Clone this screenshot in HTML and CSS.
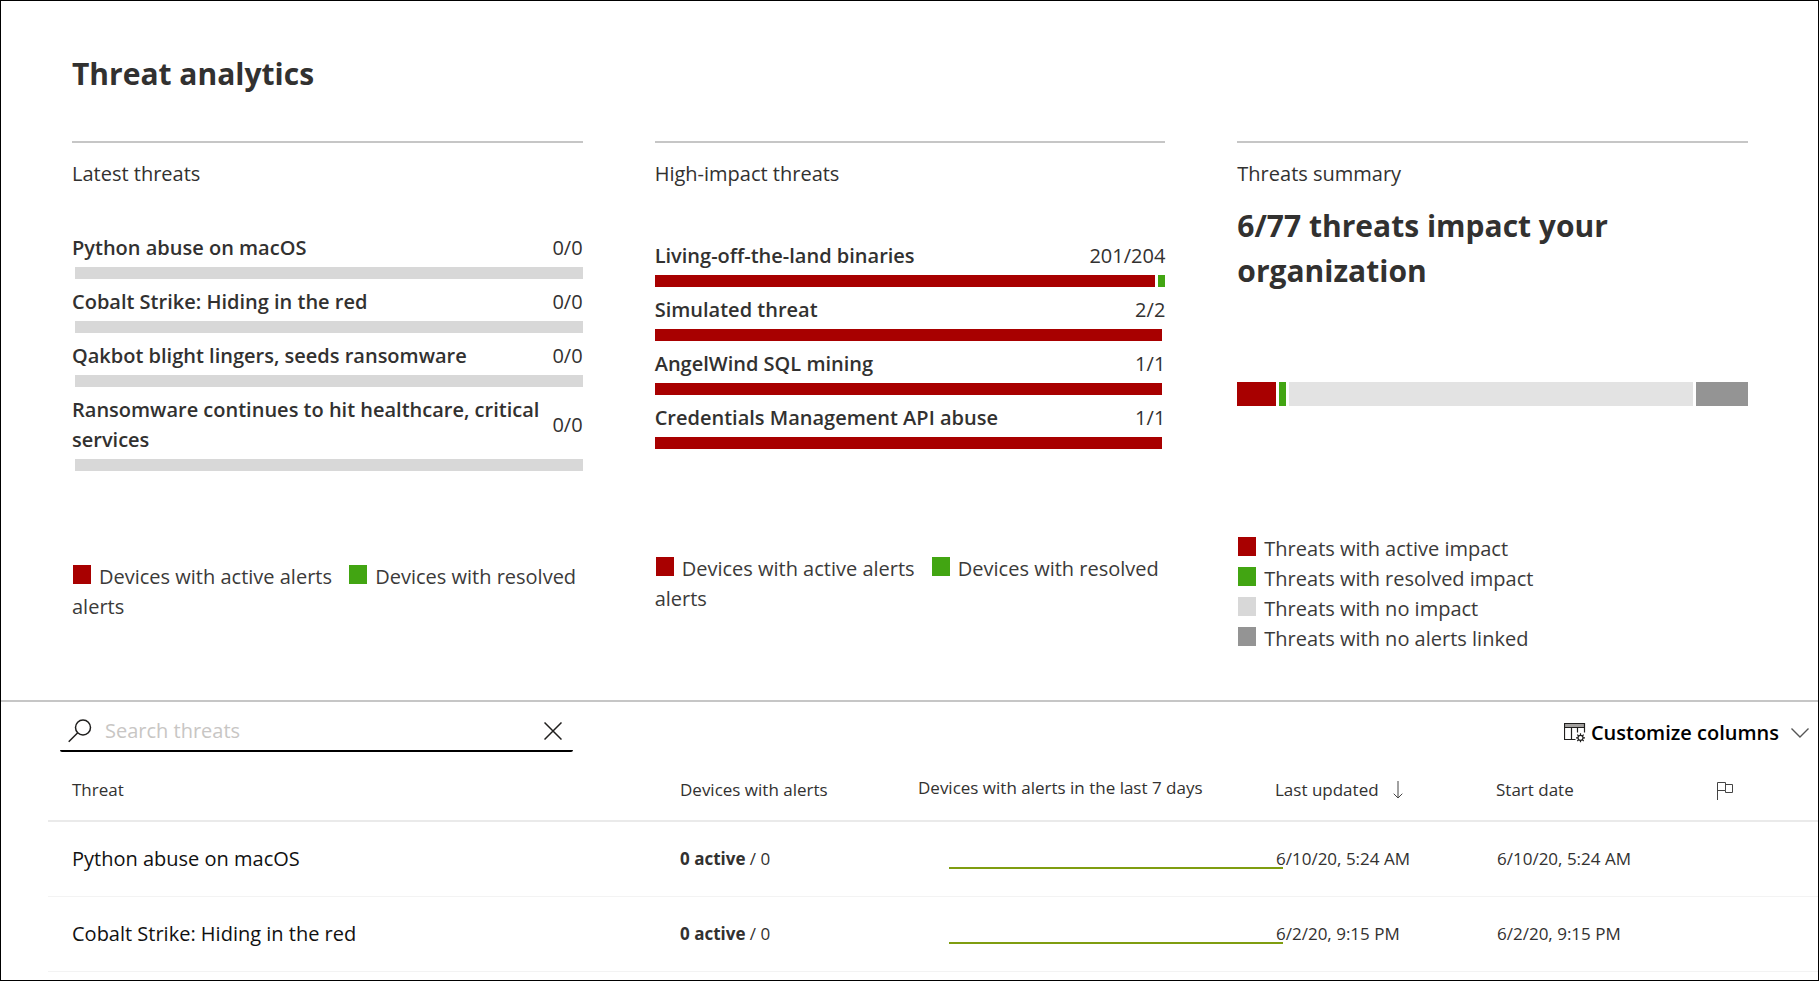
FILE: index.html
```html
<!DOCTYPE html>
<html lang="en">
<head>
<meta charset="utf-8">
<title>Threat analytics</title>
<link rel="stylesheet" href="styles.css">
</head>
<body>
<main class="page">
  <section class="overview">
    <h1 class="page-title">Threat analytics</h1>
    <div class="cards">
      <article class="card">
        <h2 class="card-label">Latest threats</h2>
        <ul class="threats threats-latest">
          <li class="threat"><div class="threat-text"><b>Python abuse on macOS</b><span>0/0</span></div><div class="bar"><i class="none"></i></div></li>
          <li class="threat"><div class="threat-text"><b>Cobalt Strike: Hiding in the red</b><span>0/0</span></div><div class="bar"><i class="none"></i></div></li>
          <li class="threat"><div class="threat-text"><b>Qakbot blight lingers, seeds ransomware</b><span>0/0</span></div><div class="bar"><i class="none"></i></div></li>
          <li class="threat"><div class="threat-text"><b>Ransomware continues to hit healthcare, critical services</b><span>0/0</span></div><div class="bar"><i class="none"></i></div></li>
        </ul>
        <p class="legend"><span class="key active"></span>Devices with active alerts <span class="key resolved next"></span>Devices with resolved alerts</p>
      </article>
      <article class="card">
        <h2 class="card-label">High-impact threats</h2>
        <ul class="threats threats-impact">
          <li class="threat"><div class="threat-text"><b>Living-off-the-land binaries</b><span>201/204</span></div><div class="bar"><i class="active"></i><i class="resolved sliver"></i></div></li>
          <li class="threat"><div class="threat-text"><b>Simulated threat</b><span>2/2</span></div><div class="bar full"><i class="active"></i></div></li>
          <li class="threat"><div class="threat-text"><b>AngelWind SQL mining</b><span>1/1</span></div><div class="bar full"><i class="active"></i></div></li>
          <li class="threat"><div class="threat-text"><b>Credentials Management API abuse</b><span>1/1</span></div><div class="bar full"><i class="active"></i></div></li>
        </ul>
        <p class="legend"><span class="key active"></span>Devices with active alerts <span class="key resolved next"></span>Devices with resolved alerts</p>
      </article>
      <article class="card">
        <h2 class="card-label">Threats summary</h2>
        <p class="headline">6/77 threats impact your organization</p>
        <div class="bar summary-bar"><i class="active" style="flex-grow:39"></i><i class="resolved sliver"></i><i class="quiet" style="flex-grow:404"></i><i class="unlinked" style="flex-grow:52"></i></div>
        <ul class="legend legend-list">
          <li><span class="key active"></span>Threats with active impact</li>
          <li><span class="key resolved"></span>Threats with resolved impact</li>
          <li><span class="key none"></span>Threats with no impact</li>
          <li><span class="key unlinked"></span>Threats with no alerts linked</li>
        </ul>
      </article>
    </div>
  </section>

  <section class="results">
    <div class="toolbar">
      <form class="search">
        <svg class="icon-search" viewBox="0 0 24 24" aria-hidden="true"><circle cx="15" cy="8.500" r="7.500"/><path d="M9.700 13.800L.7 22.800"/></svg>
        <input class="search-input" type="text" placeholder="Search threats" aria-label="Search threats">
        <button class="clear" type="reset" aria-label="Clear search"><svg class="icon-clear" viewBox="0 0 18 18" aria-hidden="true"><path d="M.5.5l17 17M17.500.5l-17 17"/></svg></button>
      </form>
      <button class="customize" type="button">
        <svg class="icon-columns" viewBox="0 0 22 20" aria-hidden="true"><path class="strip" d="M.5.5h20v4H.5z"/><path d="M11.500 16.500H.5V.5h20v9M.5 4.500h20M7.500 4.500v12M13.500 4.500v5"/><circle cx="16.500" cy="14.800" r="2.500"/><path d="M16.500 10.300v2M16.500 17.300v2M12 14.800h2M19 14.800h2M13.300 11.600l1.400 1.400M18.300 16.600l1.400 1.400M13.300 18l1.400-1.400M18.300 13l1.400-1.400"/></svg>
        <span>Customize columns</span>
        <svg class="icon-chevron" viewBox="0 0 18 10" aria-hidden="true"><path d="M.5.5L9 9l8.500-8.500"/></svg>
      </button>
    </div>
    <table class="grid">
      <colgroup><col><col class="col-alerts"><col class="col-trend"><col class="col-date"><col class="col-date"><col class="col-flag"></colgroup>
      <thead>
        <tr>
          <th scope="col">Threat</th>
          <th scope="col">Devices with alerts</th>
          <th scope="col" class="trend-head">Devices with alerts in the last 7 days</th>
          <th scope="col">Last updated<svg class="icon-sort" viewBox="0 0 10 18" aria-label="sorted descending"><path d="M5 0v17M.7 12.700L5 17l4.300-4.300"/></svg></th>
          <th scope="col">Start date</th>
          <th scope="col"><svg class="icon-flag" viewBox="0 0 16 18" aria-label="Flag"><path d="M.5 18V.5h8v8h-8M8.500 2.500h7v8h-7v-2"/></svg></th>
        </tr>
      </thead>
      <tbody>
        <tr>
          <td class="name">Python abuse on macOS</td>
          <td><b>0 active</b> / 0</td>
          <td><div class="spark"></div></td>
          <td class="date">6/10/20, 5:24 AM</td>
          <td class="date">6/10/20, 5:24 AM</td>
          <td></td>
        </tr>
        <tr>
          <td class="name">Cobalt Strike: Hiding in the red</td>
          <td><b>0 active</b> / 0</td>
          <td><div class="spark"></div></td>
          <td class="date">6/2/20, 9:15 PM</td>
          <td class="date">6/2/20, 9:15 PM</td>
          <td></td>
        </tr>
      </tbody>
    </table>
  </section>
</main>
</body>
</html>
```
FILE: styles.css
```css
* { box-sizing: border-box; }

body {
  margin: 0;
  background: #fff;
  color: #323130;
  font: 20px/30px "Open Sans", "Noto Sans", sans-serif;
}

h1, h2, p, ul { margin: 0; padding: 0; }
ul { list-style: none; }
b { font-weight: 600; }

.page {
  min-height: 100vh;
  border: 1px solid #000;
}

/* Overview cards */
.overview {
  padding: 50px 70px 46px 71px;
  border-bottom: 2px solid #c6c6c6;
}

.page-title {
  margin-bottom: 45px;
  font-size: 30px;
  line-height: 45px;
  font-weight: 700;
}

.cards {
  display: grid;
  grid-template-columns: repeat(3, minmax(0, 1fr));
  gap: 72px;
}

.card {
  padding-top: 16px;
  border-top: 2px solid #c6c6c6;
}

.card-label {
  font-size: 20px;
  font-weight: 500;
  line-height: 30px;
}

.threats {
  display: grid;
  gap: 8px;
}
.threats-latest { margin: 44px 0 91px; }
.threats-impact { margin: 52px 0 105px; }

.threat-text {
  display: flex;
  justify-content: space-between;
  align-items: center;
  margin-bottom: 4px;
}

.bar {
  display: flex;
  gap: 3px;
  height: 12px;
}
.bar i { flex: 1 1 0; }
.bar .sliver { flex: 0 0 7px; }
.bar.full { padding-right: 3px; }
.threats-latest .bar { padding-left: 3px; }

.active { background: #a80000; }
.resolved { background: #42a512; }
.none { background: #d8d8d8; }
.quiet { background: #e3e3e3; }
.unlinked { background: #949494; }

.headline {
  margin-top: 14px;
  font-size: 30px;
  line-height: 45px;
  font-weight: 700;
}
.summary-bar {
  height: 24px;
  margin: 89px 0 128px;
}

.legend { color: #3b3a39; }
.key {
  display: inline-block;
  width: 18px;
  height: 19px;
  margin: 0 8px 0 1px;
}
.key.next { margin-left: 12px; }

/* Toolbar */
.toolbar {
  display: flex;
  justify-content: space-between;
  align-items: flex-start;
  padding: 10px 9px 0 59px;
}

.search {
  display: flex;
  align-items: center;
  flex: 0 1 513px;
  height: 40px;
  padding: 0 11px 0 8px;
  border-bottom: 2px solid #000;
  border-radius: 2px;
}
.search-input {
  flex: 1;
  min-width: 0;
  margin-left: 13px;
  padding: 0;
  border: 0;
  outline: 0;
  background: none;
  color: #323130;
  font: inherit;
}
.search-input::placeholder { color: #c8c6c4; opacity: 1; }

button {
  padding: 0;
  border: 0;
  background: none;
  color: #000;
  font: inherit;
}
.clear { display: flex; }

.customize {
  display: flex;
  align-items: center;
  height: 42px;
  font-weight: 600;
}
.customize span { margin: 0 12px 0 5px; }

svg { fill: none; stroke: #201f1e; flex: none; }
.icon-search { width: 24px; height: 24px; stroke-width: 1.5; }
.icon-clear { width: 18px; height: 18px; stroke-width: 1.5; }
.icon-columns { width: 22px; height: 20px; stroke-width: 1.2; }
.icon-columns .strip { fill: #a19f9d; stroke: none; }
.icon-chevron { width: 18px; height: 10px; stroke: #555; stroke-width: 1.4; }
.icon-sort { width: 10px; height: 18px; margin-left: 14px; vertical-align: -3px; stroke: #444; }
.icon-flag { width: 16px; height: 18px; vertical-align: -4px; stroke: #444; }

/* Results table */
.grid {
  width: calc(100% - 47px);
  margin-left: 47px;
  border-collapse: separate;
  border-spacing: 0;
  table-layout: fixed;
  font-size: 17px;
}
.col-alerts { width: 238px; }
.col-trend { width: 357px; }
.col-date { width: 221px; }
.col-flag { width: 101px; }

.grid th, .grid td {
  padding: 0;
  text-align: left;
  vertical-align: middle;
  white-space: nowrap;
  font-weight: 400;
}
.grid th {
  height: 68px;
  padding-top: 10px;
  padding-bottom: 4px;
  border-bottom: 2px solid #eaeaea;
}
.grid th.trend-head { padding-top: 8px; padding-bottom: 6px; }
.grid td {
  height: 75px;
  border-bottom: 1px solid #f3f3f3;
}
.grid th:first-child, .grid td:first-child { padding-left: 24px; }
.grid td.date { padding-left: 1px; }
.grid td b { font-weight: 700; }
.grid .name { font-size: 20px; color: #111; }

.spark {
  width: 334px;
  height: 2px;
  margin: 18px 0 0 31px;
  background: #7f9d10;
}
```
